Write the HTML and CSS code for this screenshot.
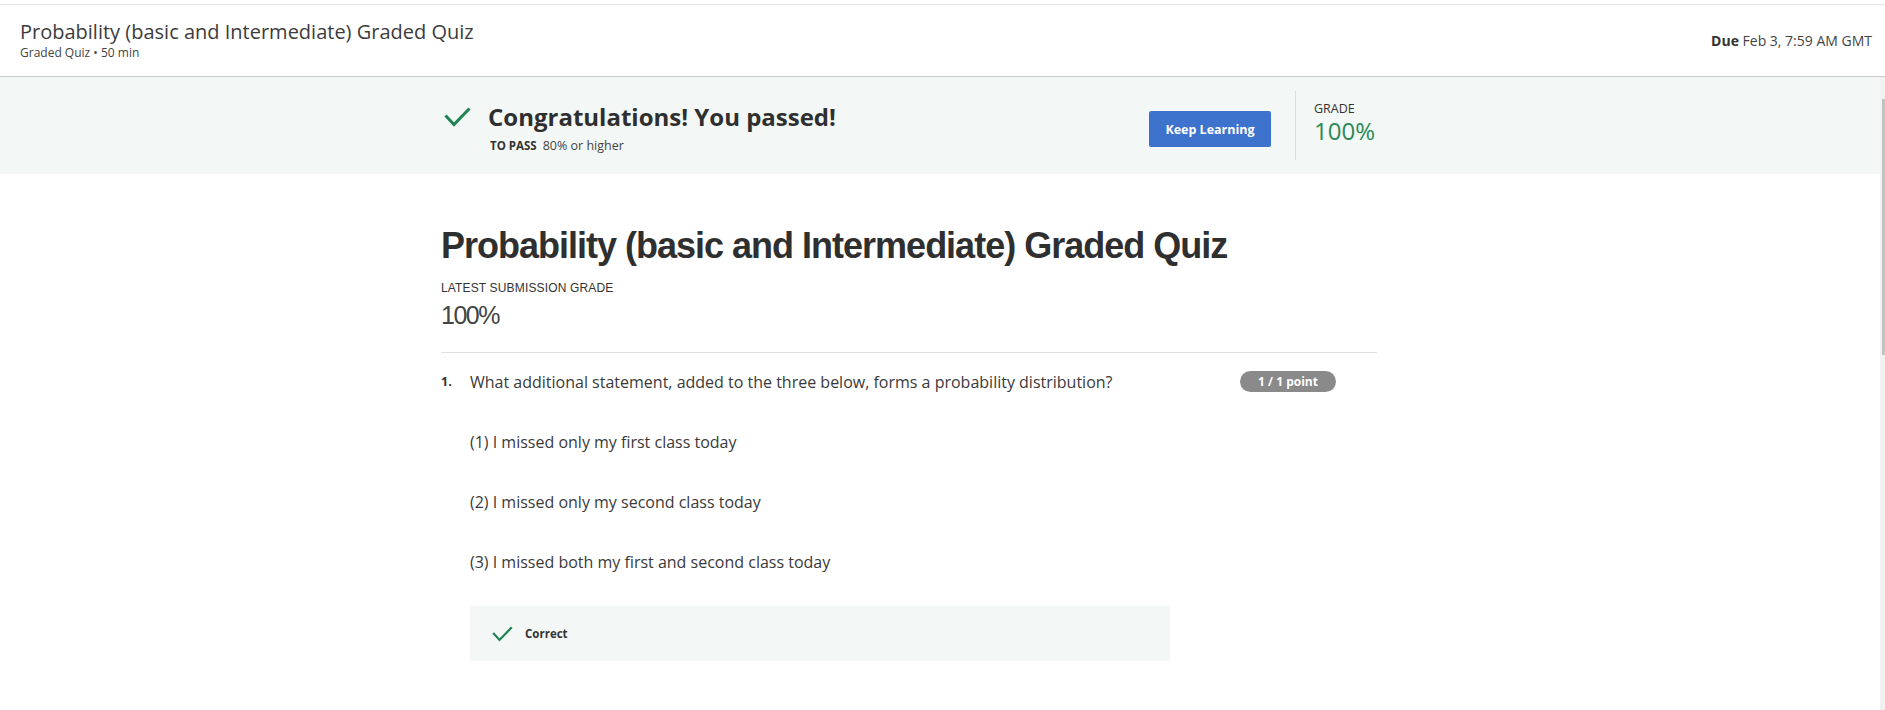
FILE: index.html
```html
<!DOCTYPE html>
<html lang="en">
<head>
<meta charset="utf-8">
<title>Probability (basic and Intermediate) Graded Quiz</title>
<link rel="stylesheet" href="styles.css">
</head>
<body>
<div class="topline"></div>
<header class="header">
  <div class="header-titles">
    <div class="header-title">Probability (basic and Intermediate) Graded Quiz</div>
    <div class="header-sub">Graded Quiz • 50 min</div>
  </div>
  <div class="due"><b>Due</b> Feb 3, 7:59 AM GMT</div>
</header>
<div class="body-row">
  <main class="scroll">
    <section class="banner">
      <div class="container banner-row">
        <div class="pass">
          <div class="pass-head">
            <svg class="pass-check" width="27" height="20" viewBox="0 0 27 20"><polyline points="1.5,8.5 10,17.5 25.5,1.5" fill="none" stroke="#1f8354" stroke-width="3"/></svg>
            <div class="pass-title">Congratulations! You passed!</div>
          </div>
          <div class="pass-sub"><b>TO PASS</b><span class="pass-req">80% or higher</span></div>
        </div>
        <button class="btn">Keep Learning</button>
        <div class="vdivider"></div>
        <div class="grade">
          <div class="grade-label">GRADE</div>
          <div class="grade-value">100%</div>
        </div>
      </div>
    </section>
    <div class="container content">
      <h1 class="quiz-title">Probability (basic and Intermediate) Graded Quiz</h1>
      <div class="latest-label">LATEST SUBMISSION GRADE</div>
      <div class="latest-value">100%</div>
      <div class="rule"></div>
      <div class="question">
        <div class="qnum">1.</div>
        <div class="qbody">
          <p class="qline">What additional statement, added to the three below, forms a probability distribution?</p>
          <p class="qline">(1) I missed only my first class today</p>
          <p class="qline">(2) I missed only my second class today</p>
          <p class="qline">(3) I missed both my first and second class today</p>
          <div class="feedback">
            <svg class="fb-check" width="21" height="16" viewBox="0 0 21 16"><polyline points="1.2,7 7.5,14 19.8,1.2" fill="none" stroke="#1f8354" stroke-width="2.2"/></svg>
            <span class="fb-text">Correct</span>
          </div>
        </div>
        <div class="points">1 / 1 point</div>
      </div>
    </div>
  </main>
  <div class="scrollbar"><div class="thumb"></div></div>
</div>
</body>
</html>
```

FILE: styles.css
```css
html, body {
  margin: 0;
  padding: 0;
  height: 100%;
  overflow: hidden;
}
body {
  font-family: "Open Sans", "Noto Sans", sans-serif;
  color: #333;
  background: #fff;
  display: flex;
  flex-direction: column;
}
.topline {
  height: 4px;
  border-bottom: 1px solid #e2e2e2;
  flex: none;
}
.header {
  flex: none;
  height: 71px;
  border-bottom: 1px solid #c8c8c8;
  display: flex;
  align-items: center;
  justify-content: space-between;
  padding: 0 13px 0 20px;
}
.header-titles {
  display: flex;
  flex-direction: column;
  margin-top: -2px;
}
.header-title {
  font-size: 20px;
  line-height: 26px;
  color: #3c3c3c;
}
.header-sub {
  font-size: 12px;
  line-height: 16px;
  color: #444;
}
.due {
  font-size: 14px;
  color: #444;
  margin-top: -1px;
}
.due b {
  font-weight: 700;
  color: #333;
}

.body-row {
  flex: 1;
  min-height: 0;
  display: flex;
}
.scroll {
  flex: 1;
  min-width: 0;
  overflow: hidden;
}
.scrollbar {
  flex: none;
  width: 5px;
  background: #f1f1f1;
  padding-top: 22px;
}
.thumb {
  height: 256px;
  margin-left: 2px;
  background: #c1c1c1;
}

.container {
  margin-left: 441px;
  width: 936px;
}
.banner {
  background: #f3f8f6;
  padding: 14px 0;
}
.banner-row {
  display: flex;
  align-items: center;
  height: 69px;
}
.pass {
  align-self: flex-start;
  margin-top: 11px;
  display: flex;
  flex-direction: column;
}
.pass-head {
  display: flex;
  align-items: center;
  height: 30px;
}
.pass-check {
  flex: none;
  margin-left: 3px;
}
.pass-title {
  margin-left: 17px;
  font-size: 24px;
  font-weight: 700;
  line-height: 30px;
  color: #2f2f2f;
}
.pass-sub {
  margin-top: 5px;
  margin-left: 49px;
  line-height: 17px;
  color: #444;
  font-size: 12.5px;
}
.pass-sub b {
  font-size: 11.5px;
  font-weight: 700;
  color: #333;
}
.pass-req {
  margin-left: 6px;
}
.btn {
  margin-left: auto;
  width: 122px;
  height: 36px;
  background: #3d73cc;
  border: none;
  border-radius: 2px;
  color: #fff;
  font-family: "Open Sans", sans-serif;
  font-weight: 700;
  font-size: 12.5px;
  padding: 0;
  margin-top: 7px;
}
.vdivider {
  width: 1px;
  height: 69px;
  background: #dcdcdc;
  margin-left: 24px;
}
.grade {
  align-self: flex-start;
  margin-top: 10px;
  margin-left: 18px;
  width: 63px;
  display: flex;
  flex-direction: column;
}
.grade-label {
  font-size: 12.5px;
  line-height: 16px;
  color: #333;
}
.grade-value {
  font-size: 24px;
  line-height: 28px;
  color: #2a8a56;
}

.content {
  padding-top: 50px;
}
.quiz-title {
  margin: 0;
  font-family: "Liberation Sans Narrow", "Liberation Sans", Arial, sans-serif;
  font-size: 36px;
  line-height: 44px;
  letter-spacing: -1px;
  font-weight: 700;
  color: #2f2f2f;
}
.latest-label {
  margin-top: 12px;
  font-family: "Liberation Sans Narrow", "Liberation Sans", Arial, sans-serif;
  font-size: 12px;
  line-height: 16px;
  letter-spacing: 0.15px;
  color: #333;
}
.latest-value {
  margin-top: 3px;
  font-family: "Liberation Sans Narrow", "Liberation Sans", Arial, sans-serif;
  font-size: 25px;
  line-height: 32px;
  letter-spacing: -1.5px;
  color: #444;
}
.rule {
  margin-top: 21px;
  height: 1px;
  background: #dedede;
}
.question {
  display: flex;
  align-items: flex-start;
  padding-top: 17px;
}
.qnum {
  width: 29px;
  flex: none;
  font-size: 12.5px;
  font-weight: 700;
  line-height: 24px;
  color: #333;
}
.qbody {
  flex: 1;
  display: flex;
  flex-direction: column;
  gap: 36px;
}
.qline {
  margin: 0;
  font-size: 16px;
  line-height: 24px;
  color: #3a3a3a;
}
.feedback {
  margin-top: -4px;
  width: 700px;
  height: 55px;
  background: #f3f8f6;
  display: flex;
  align-items: center;
  padding-left: 22px;
  box-sizing: border-box;
}
.fb-check {
  flex: none;
}
.fb-text {
  margin-left: 12px;
  font-size: 11.5px;
  font-weight: 700;
  color: #333;
}
.points {
  flex: none;
  margin-left: 20px;
  margin-right: 41px;
  margin-top: 1px;
  width: 96px;
  height: 21px;
  border-radius: 11px;
  background: #8a8a8a;
  color: #fff;
  font-size: 12px;
  font-weight: 700;
  line-height: 21px;
  text-align: center;
}
```
